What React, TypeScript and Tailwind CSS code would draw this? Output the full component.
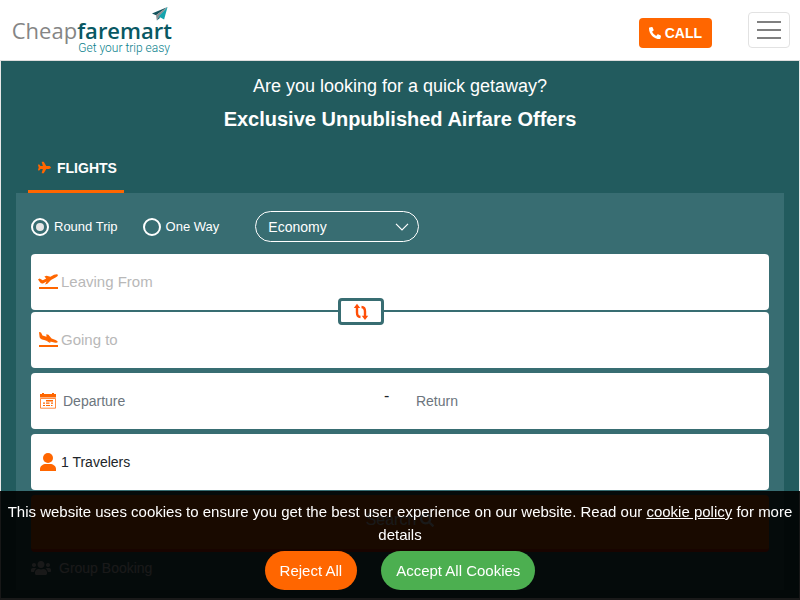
import type { ReactNode } from "react";
import { FaPhoneAlt, FaPlane, FaSearch, FaUsers } from "react-icons/fa";

const fieldClassName =
  "flex h-14 items-center rounded-sm bg-white leading-5";

const inputClassName = "min-w-0 flex-1 bg-transparent outline-none";

function PaperPlane() {
  return (
    <svg viewBox="0 0 16 15" className="h-[15px] w-4" aria-hidden="true">
      <path d="M15.5 0 0 6.5l4 1.8Z" fill="#14525c" />
      <path d="M15.5 0 4 8.3l.8 5.2 2-3.8Z" fill="#8b8f92" />
      <path d="M15.5 0 6.6 9.4l5.5 3.2Z" fill="#14a3ad" />
      <path d="m6.8 9.7-2 3.8 3.4-2.8Z" fill="#0c6470" />
    </svg>
  );
}

function Logo() {
  return (
    <a href="/" className="mt-0.5 flex w-40 flex-col items-end" aria-label="Cheapfaremart home">
      <span className="mr-1">
        <PaperPlane />
      </span>
      <span className="-mt-1 whitespace-nowrap font-['Open_Sans',sans-serif] text-[22px] leading-6 text-[#858585]">
        Cheap<span className="font-semibold text-[#085863]">faremart</span>
      </span>
      <span className="mr-0.5 -mt-px whitespace-nowrap font-[Roboto,sans-serif] text-xs font-light leading-[14px] text-[#08808c]">
        Get your trip easy
      </span>
    </a>
  );
}

function TakeoffIcon() {
  return (
    <svg viewBox="0 0 20 16" className="h-4 w-5" fill="currentColor" aria-hidden="true">
      <path d="M0 5.4 1.6 4.6 4.8 6.2 8.2 4.5 6.4 2.4 8.6 1.7 12.4 2.7 16 .8Q19.4 -.5 20 .9 20 2.2 17.6 3.6L13 5.9 9.4 9.8 7 10.6 8.6 7.6 5 9.4Q3.4 9.9 2.4 8.8Z" />
      <path d="M1 13h19v2H1Z" />
    </svg>
  );
}

function LandingIcon() {
  return (
    <svg viewBox="0 0 20 16" className="h-4 w-5" fill="currentColor" aria-hidden="true">
      <path d="m1 0 2 .6L4.5 3.6l4 1.2-.2-2.6 2.1.6 3.2 3.6 4 1.5q2.6 1.2 2 2.4-.8.9-3.4.1L4 7.5Q2 6.8 1.6 5.2Z" />
      <path d="m7 7.8 6.5 2-2 .9Z" />
      <path d="M1 13h19v2H1Z" />
    </svg>
  );
}

function CalendarIcon() {
  return (
    <svg viewBox="0 0 18 18" className="h-[18px] w-[18px] text-[#ff6600]" fill="currentColor" aria-hidden="true">
      <path d="M1 2h2V1h2v1h8V1h2v1h2v3.5H1Z" />
      <path d="M1.5 6.5h15v9.7h-15Z" fill="none" stroke="currentColor" strokeOpacity=".75" />
      <path d="M7 8h7v1.4H7ZM4 10.5h2v1.2H4Zm3 0h3.5v1.2H7Zm5 0h2v1.2h-2Zm-8 2.4h2v1.1H4Zm3 0h4v1.1H7Zm5 0h1.5v1.1H12Z" />
    </svg>
  );
}

function PersonIcon() {
  return (
    <svg viewBox="0 0 18 20" className="h-5 w-[18px] text-[#ff6600]" fill="currentColor" aria-hidden="true">
      <circle cx="9" cy="6" r="5" />
      <path d="M1 19v-2c0-3 3-5 6-5h4c3 0 6 2 6 5v2Z" />
    </svg>
  );
}

function SwapIcon() {
  return (
    <svg viewBox="0 0 16 18" className="h-[18px] w-4" fill="none" stroke="#ff4f08" strokeWidth="2.4" aria-hidden="true">
      <path d="M4 3v6.5q0 4.3 3.5 4.5" />
      <path d="M12 14V8.5Q12 4.2 8.5 4" />
      <path d="M4 .8.8 5h6.4ZM12 17l-3.2-4.2h6.4Z" fill="#ff4f08" stroke="none" />
    </svg>
  );
}

type TripOptionProps = {
  label: string;
  value: string;
  defaultChecked?: boolean;
};

function TripOption({ label, value, defaultChecked }: TripOptionProps) {
  return (
    <label className="flex items-center gap-[5px] text-[13px] leading-5 text-white">
      <input
        type="radio"
        name="trip"
        value={value}
        defaultChecked={defaultChecked}
        className="h-[18px] w-[18px] appearance-none rounded-full border-2 border-white p-[3px] checked:bg-[#e6e6e6] checked:bg-clip-content"
      />
      {label}
    </label>
  );
}

type AirportFieldProps = {
  name: string;
  placeholder: string;
  icon: ReactNode;
};

function AirportField({ name, placeholder, icon }: AirportFieldProps) {
  return (
    <label className={`${fieldClassName} gap-[3px] px-[7px] text-[15px]`}>
      <span className="text-[#ff6600]">{icon}</span>
      <input
        name={name}
        aria-label={placeholder}
        placeholder={placeholder}
        className={`${inputClassName} placeholder:text-[#b8b8b8]`}
      />
    </label>
  );
}

function Header() {
  return (
    <header className="flex h-[61px] items-center justify-between border-b border-[#ddd] bg-white pl-3 pr-2.5">
      <Logo />
      <div className="flex items-center gap-9">
        <a
          href="tel:"
          className="mt-1.5 flex h-[30px] items-center gap-1 rounded-sm bg-[#ff6600] px-2.5 text-sm font-bold text-white"
        >
          <FaPhoneAlt className="h-3 w-3 rotate-90 -scale-x-100" />
          CALL
        </a>
        <button
          type="button"
          aria-label="Toggle navigation"
          className="flex h-9 w-[42px] flex-col items-center justify-center gap-1.5 rounded border border-[#e2e2e2]"
        >
          <span className="h-0.5 w-6 bg-[#808080]" />
          <span className="h-0.5 w-6 bg-[#808080]" />
          <span className="h-0.5 w-6 bg-[#808080]" />
        </button>
      </div>
    </header>
  );
}

function SearchForm() {
  return (
    <form className="bg-[#386d72] px-[15px] pb-3 pt-[18px]">
      <div className="flex items-center">
        <div className="flex gap-[25px]">
          <TripOption label="Round Trip" value="round" defaultChecked />
          <TripOption label="One Way" value="oneway" />
        </div>
        <div className="relative ml-9">
          <select
            name="cabin"
            aria-label="Cabin class"
            className="block h-[31px] w-[164px] appearance-none rounded-full border border-white bg-transparent px-3 text-sm text-white outline-none"
          >
            <option>Economy</option>
            <option>Premium Economy</option>
            <option>Business</option>
            <option>First</option>
          </select>
          <svg
            viewBox="0 0 14 8"
            className="pointer-events-none absolute right-2.5 top-3 h-2 w-3.5"
            fill="none"
            stroke="white"
            strokeWidth="1.2"
            aria-hidden="true"
          >
            <path d="m1 .8 6 6 6-6" />
          </svg>
        </div>
      </div>

      <div className="relative mt-3 grid gap-0.5">
        <AirportField name="from" placeholder="Leaving From" icon={<TakeoffIcon />} />
        <AirportField name="to" placeholder="Going to" icon={<LandingIcon />} />
        <button
          type="button"
          aria-label="Swap airports"
          className="absolute left-[307px] top-11 flex h-[27px] w-[46px] items-center justify-center rounded border-3 border-[#386d72] bg-white"
        >
          <SwapIcon />
        </button>
      </div>

      <div className={`${fieldClassName} mt-[5px] pl-2 text-sm`}>
        <CalendarIcon />
        <input
          name="departure"
          aria-label="Departure"
          placeholder="Departure"
          className={`${inputClassName} ml-1.5 placeholder:text-[#6c757d]`}
        />
        <span className="mb-2.5 w-8 text-base text-[#212529]">-</span>
        <input
          name="return"
          aria-label="Return"
          placeholder="Return"
          className={`${inputClassName} grow-[1.1] placeholder:text-[#6c757d]`}
        />
      </div>

      <button type="button" className={`${fieldClassName} mt-[5px] w-full gap-1 px-2 text-sm text-[#212529]`}>
        <PersonIcon />
        1 Travelers
      </button>

      <button
        type="submit"
        className="mt-[5px] flex h-[57px] w-full items-center justify-center gap-1 rounded border-b-3 border-[#f02a00] bg-[#ff6600] pb-1 text-base text-white"
      >
        Search <FaSearch className="h-3.5 w-3.5" />
      </button>
      <a href="#group" className="mt-1.5 flex items-center gap-2 text-sm leading-5 text-white">
        <FaUsers className="h-5 w-5" />
        Group Booking
      </a>
    </form>
  );
}

function CookieBanner() {
  return (
    <div className="fixed inset-x-0 bottom-0 bg-black/90 px-1 pb-2.5 pt-[9px] text-center text-[15px] leading-[23px] text-white">
      <p>
        This website uses cookies to ensure you get the best user experience on our website. Read our{" "}
        <a href="#cookies" className="underline">
          cookie policy
        </a>{" "}
        for more details
      </p>
      <div className="mt-[5px] flex justify-center gap-6">
        <button type="button" className="h-[39px] rounded-full bg-[#ff6600] px-[15px]">
          Reject All
        </button>
        <button type="button" className="h-[39px] rounded-full bg-[#4caf50] px-[15px]">
          Accept All Cookies
        </button>
      </div>
    </div>
  );
}

export default function App() {
  return (
    <div className="bg-[#e8e8e8] font-['Liberation_Sans',Arial,sans-serif]">
      <Header />
      <main className="mx-px bg-[#225b5e] px-[15px] pb-2 pt-3">
        <h2 className="text-center text-lg leading-[26px] text-white">Are you looking for a quick getaway?</h2>
        <h1 className="mt-[7px] text-center text-xl font-bold leading-[26px] text-white">
          Exclusive Unpublished Airfare Offers
        </h1>
        <nav className="mt-[11px] px-3">
          <a
            href="#flights"
            className="inline-flex h-[50px] w-24 items-center gap-1.5 border-b-3 border-[#ff6600] px-2.5 pt-0.5 align-top text-sm font-bold text-white"
          >
            <FaPlane className="h-[13px] w-[13px] shrink-0 text-[#ff6600]" />
            FLIGHTS
          </a>
        </nav>
        <SearchForm />
      </main>
      <CookieBanner />
    </div>
  );
}
